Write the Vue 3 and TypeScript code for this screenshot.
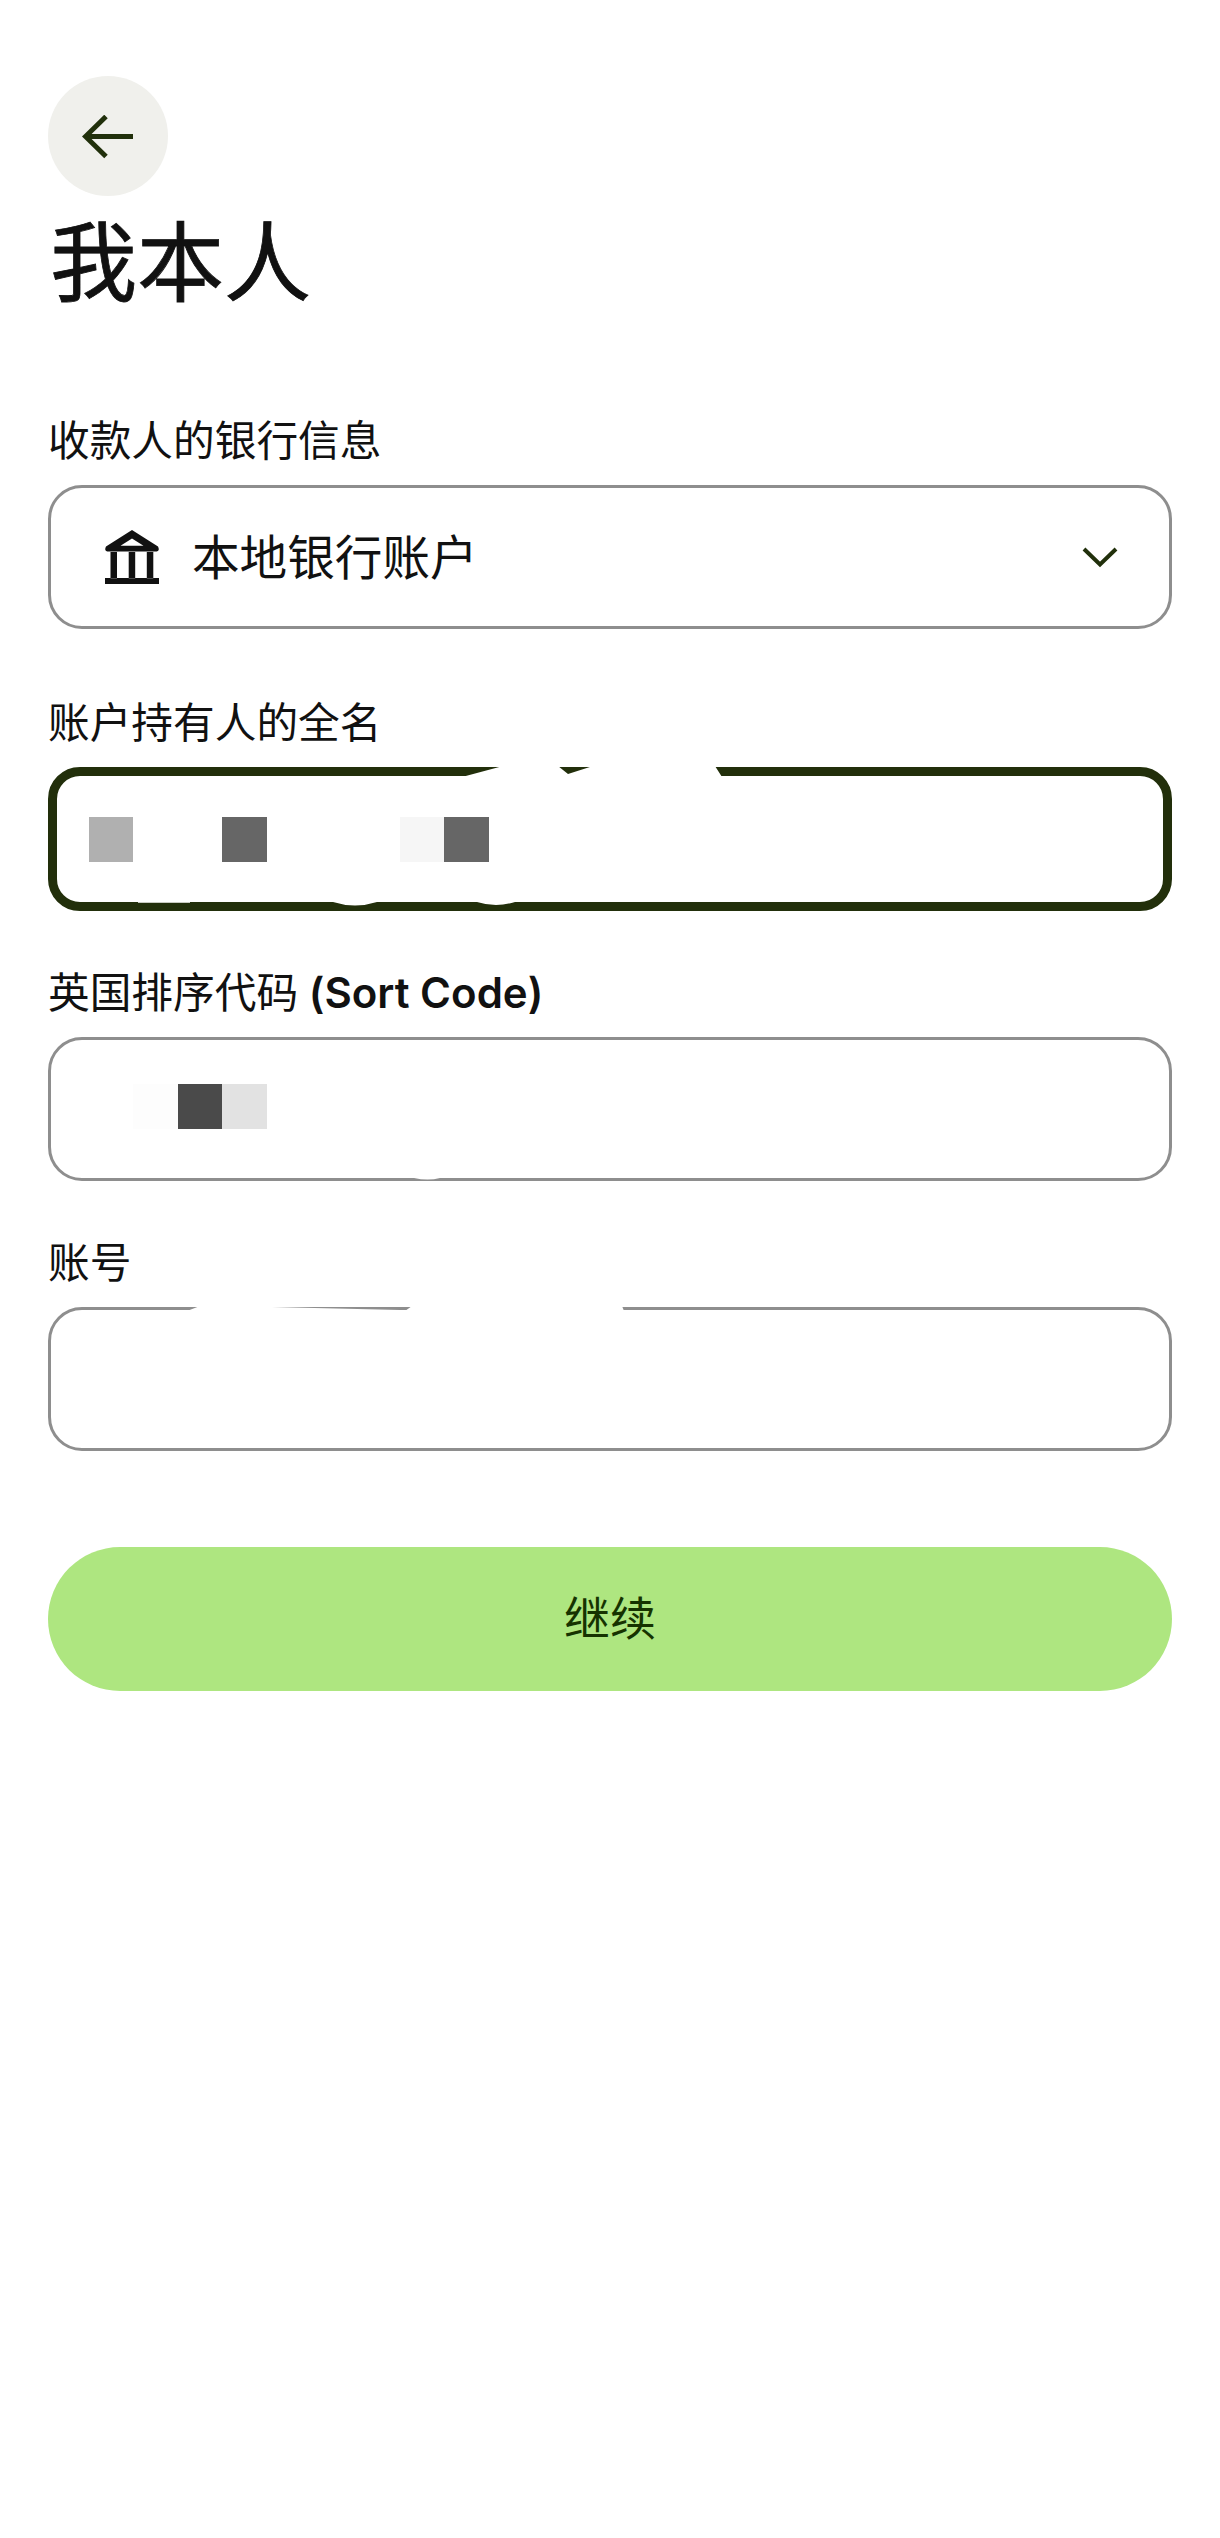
<script setup lang="ts">
interface Field {
  label: string;
  latin?: string;
  active?: boolean;
  tileTop: number;
  tiles: string[];
  retouch: string;
}

const white = 'transparent';

// x/y in the retouch paths are relative to the field box
const fields: Field[] = [
  {
    label: '账户持有人的全名',
    active: true,
    tileTop: 50,
    tiles: ['#b0b0b0', white, white, '#666666', white, white, white, '#f6f6f6', '#666666'],
    retouch:
      'M414 10 L455 -1 L510 -1 L520 7 L545 -1 L667 -1 L674 10 Z ' +
      'M285 135 Q307 142 329 135 Z M429 135 Q448 141 467 135 Z M90 135 L142 135 L142 135.8 L90 135.8 Z'
  },
  {
    label: '英国排序代码',
    latin: ' (Sort Code)',
    tileTop: 47,
    tiles: [white, '#fdfdfd', '#4a4a4a', '#e2e2e2'],
    retouch: 'M366 141 Q380 144 392 141 Z'
  },
  {
    label: '账号',
    tileTop: 44,
    tiles: [],
    retouch:
      'M139 4 L152 -1 L224 -1 L224 0 L352 3 L357 4 Z M357 4 L364 -1 L574 -1 L576 4 Z'
  }
];
</script>

<template>
  <main class="page">
    <button class="back" type="button" aria-label="返回">
      <svg class="arrow" width="52" height="44" viewBox="0 0 52 44" fill="none">
        <path d="M3 21.5H51M24 1.5L3.5 21.5L24 41.5" stroke="#21300b" stroke-width="5" />
      </svg>
    </button>

    <h1 class="title">我本人</h1>

    <label class="label first">收款人的银行信息</label>
    <div class="select">
      <svg class="bank" width="54" height="54" viewBox="0 0 54 54">
        <path
          fill-rule="evenodd"
          fill="#111111"
          d="M27 0L53 16.5Q55.5 21.5 50 21.5H4Q-1.5 21.5 1 16.5ZM27 8.5L15.5 15.7H38.5ZM5.5 21H12V48.3H5.5ZM23.7 21H30.2V48.3H23.7ZM41.8 21H48.3V48.3H41.8ZM0 48H54V54H0Z"
        />
      </svg>
      <span class="select-text">本地银行账户</span>
      <svg class="chevron" width="36" height="22" viewBox="0 0 36 22" fill="none">
        <path d="M2 3L18 18.5L34 3" stroke="#21300b" stroke-width="4" />
      </svg>
    </div>

    <template v-for="field in fields" :key="field.label">
      <label class="label">{{ field.label }}<span v-if="field.latin" class="latin">{{ field.latin }}</span></label>
      <div class="field">
        <div class="box" :class="{ active: field.active }" />
        <div class="tiles" :style="{ top: field.tileTop + 'px' }">
          <i v-for="(tile, i) in field.tiles" :key="i" class="tile" :style="{ background: tile }" />
        </div>
        <svg class="retouch" width="1124" height="144" viewBox="0 0 1124 144">
          <path :d="field.retouch" fill="#ffffff" />
        </svg>
      </div>
    </template>

    <button class="continue" type="button">继续</button>
  </main>
</template>

<style scoped>
.page {
  box-sizing: border-box;
  width: 1220px;
  min-height: 2538px;
  padding: 76px 48px 0;
  background: #ffffff;
  color: #111111;
  font-family: "Noto Sans CJK SC", "Liberation Sans", sans-serif;
}

.back {
  display: flex;
  align-items: center;
  justify-content: center;
  width: 120px;
  height: 120px;
  padding: 0;
  border: 0;
  border-radius: 50%;
  background: #f0f0ec;
}

.arrow {
  margin-top: 2px;
}

.title {
  margin: 0 0 0 2px;
  font-size: 87px;
  font-weight: 400;
  -webkit-text-stroke: 0.8px #111111;
  line-height: 122px;
}

.label {
  display: block;
  margin: 53px 0 21px;
  font-size: 41.7px;
  line-height: 52px;
  font-weight: 400;
}

.label.first {
  margin-top: 94px;
}

.latin {
  font-family: Inter, "Liberation Sans", sans-serif;
  font-size: 42px;
  font-weight: 600;
  line-height: 1;
}

.select {
  display: flex;
  align-items: center;
  box-sizing: border-box;
  height: 144px;
  margin-bottom: 65px;
  padding: 0 51px 0 54px;
  border: 3px solid #8e8e8e;
  border-radius: 34px;
}

.select-text {
  margin-left: 33px;
  padding-bottom: 4px;
  font-size: 47.6px;
  line-height: 60px;
}

.chevron {
  margin-left: auto;
}

.field {
  position: relative;
  height: 144px;
}

.box {
  box-sizing: border-box;
  height: 100%;
  border: 3.5px solid #8e8e8e;
  border-radius: 34px;
}

.box.active {
  border: 9px solid #222f0b;
  border-radius: 32px;
}

.tiles {
  position: absolute;
  left: 41px;
  display: flex;
}

.tile {
  display: block;
  width: 44.4px;
  height: 45px;
}

.retouch {
  position: absolute;
  top: 0;
  left: 0;
  overflow: visible;
}

.continue {
  display: block;
  width: 100%;
  height: 144px;
  margin-top: 96px;
  padding: 0 0 8px;
  border: 0;
  border-radius: 72px;
  background: #aee680;
  color: #163300;
  font-family: inherit;
  font-size: 46px;
  font-weight: 400;
}
</style>
